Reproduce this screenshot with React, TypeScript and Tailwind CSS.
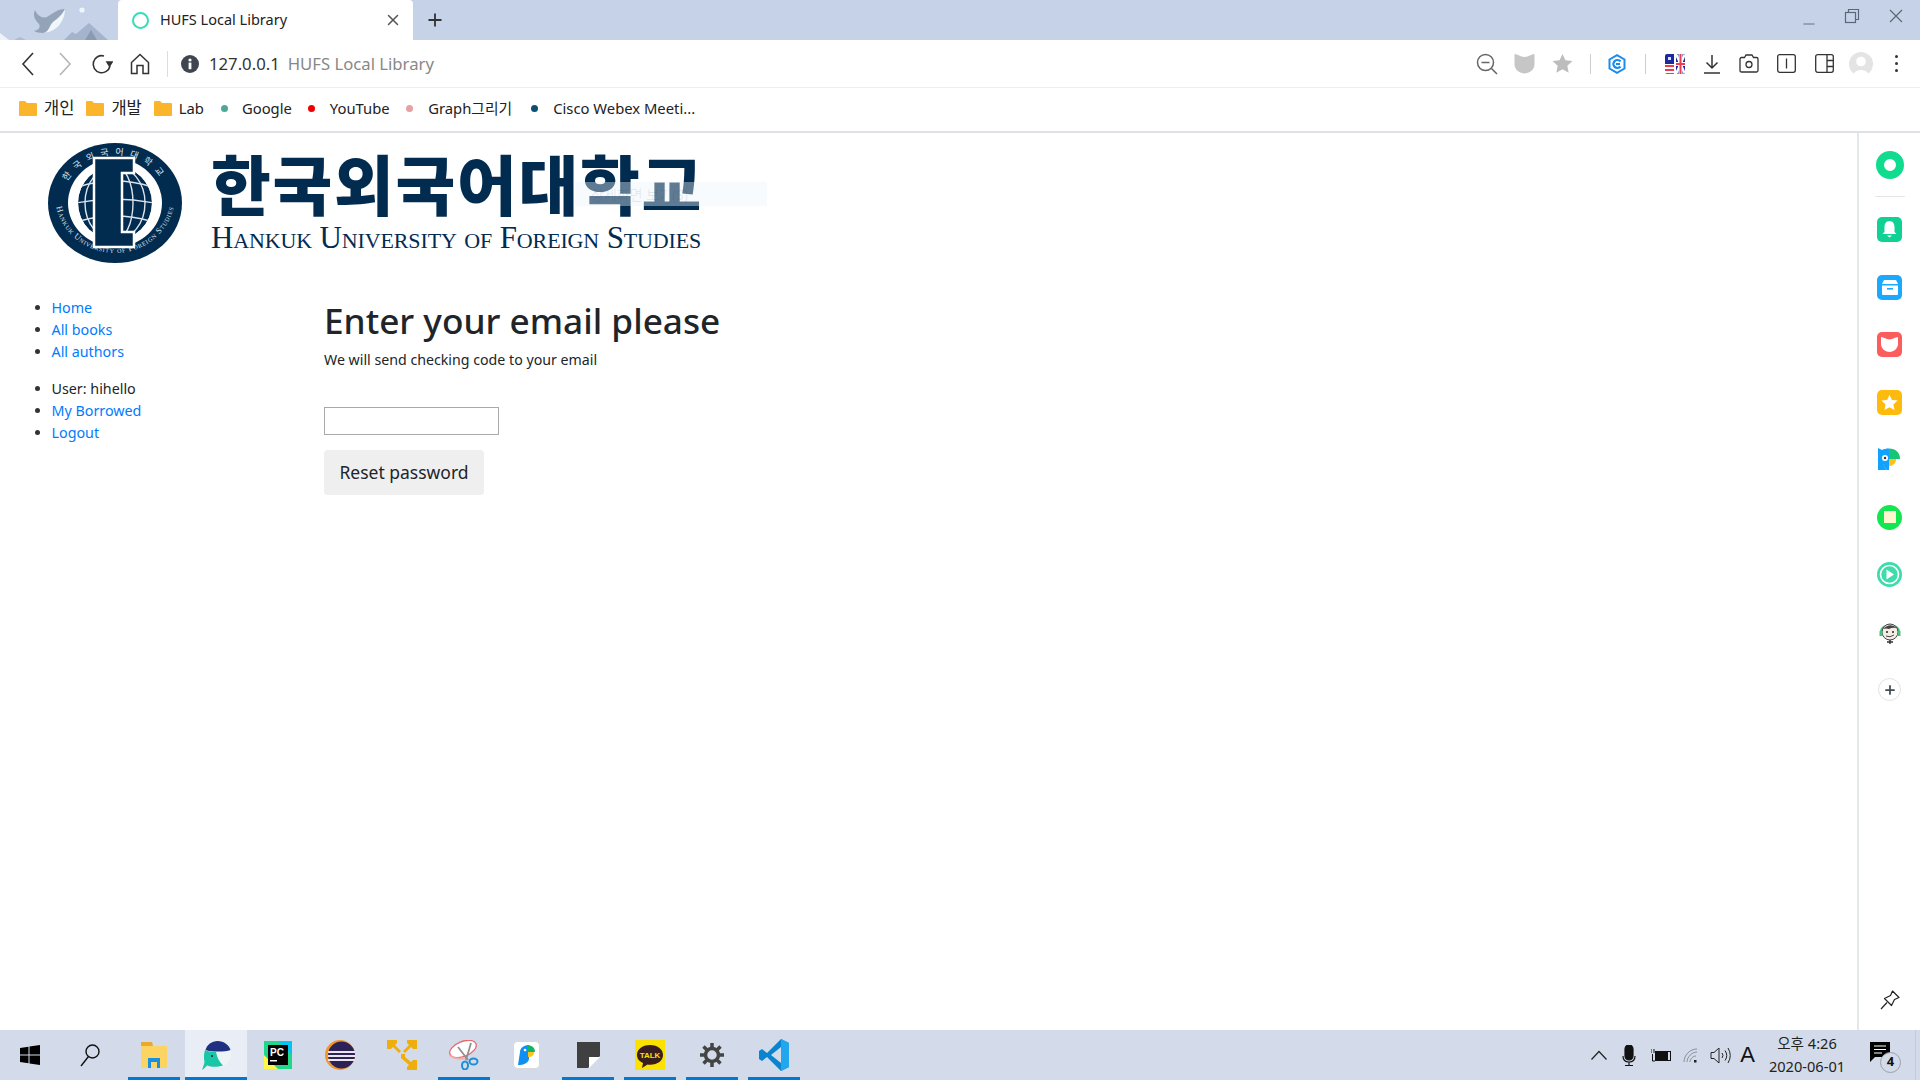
import { Minus, Plus, X } from "lucide-react";

const UI_FONT = "font-['Noto_Sans','Noto_Sans_CJK_KR',sans-serif]";

function Wallpaper() {
  return (
    <svg width="118" height="40" viewBox="0 0 118 40" className="shrink-0">
      <rect width="118" height="40" fill="#c5d2e8" />
      <path d="M0 33 L9 40 L0 40 Z" fill="#eef3fa" />
      <path d="M14 40 L20 37 L26 40 Z" fill="#aebcd3" />
      <path d="M64 40 L72 32 L76 34 L89 23 L108 40 Z" fill="#a5b4cc" />
      <path d="M85 40 L91 30 L97 40 Z" fill="#8a9ab4" />
      <circle cx="82" cy="10" r="2.6" fill="#f1f5fb" />
      <path d="M35 10 C37 15 42 19 47 17 C52 14 57 9 65 9 C63 21 55 33 43 33 C39 33 36 32 34 31 C38 30 41 28 39 24 C36 21 32 16 35 10 Z" fill="#95a3b9" />
      <path d="M65 9 C65 22 55 33 43 33 C49 32 49 26 53 22 C58 18 62 15 65 9 Z" fill="#eff7fb" />
    </svg>
  );
}

function Tab() {
  return (
    <div className="flex h-10 w-[295px] shrink-0 items-center rounded-t-[4px] bg-white">
      <span className="ml-[14px] h-[17px] w-[17px] rounded-full border-2 border-[#2fe0bb]" />
      <span className="ml-[11px] text-[14.5px] text-[#222]">HUFS Local Library</span>
      <X className="ml-auto mr-[11px] h-[18px] w-[18px] text-[#555]" strokeWidth={2} />
    </div>
  );
}

function WindowControls() {
  return (
    <div className="ml-auto flex items-center pr-[17px] text-[#5d6675]">
      <Minus className="mt-[8px] h-[18px] w-[18px]" strokeWidth={1.2} />
      <svg width="16" height="16" viewBox="0 0 16 16" fill="none" stroke="currentColor" strokeWidth="1.2" className="ml-[26px] mb-[8px]">
        <rect x="1.5" y="4.5" width="10" height="10" />
        <path d="M4.5 4.5 V1.5 H14.5 V11.5 H11.5" />
      </svg>
      <svg width="14" height="14" viewBox="0 0 14 14" fill="none" stroke="currentColor" strokeWidth="1.2" className="ml-[29px] mb-[8px]">
        <path d="M1 1 L13 13 M13 1 L1 13" />
      </svg>
    </div>
  );
}

function Slot({ children }: { children: React.ReactNode }) {
  return <div className="flex w-[37px] shrink-0 items-center justify-center">{children}</div>;
}

function NavLeft() {
  return (
    <div className="flex items-center pl-[9px] text-[#333]">
      <Slot>
        <svg width="14" height="26" viewBox="0 0 14 26" fill="none" stroke="#333" strokeWidth="1.6"><path d="M12 2 L2 13 L12 24" /></svg>
      </Slot>
      <Slot>
        <svg width="14" height="26" viewBox="0 0 14 26" fill="none" stroke="#b5b5b5" strokeWidth="1.6"><path d="M2 2 L12 13 L2 24" /></svg>
      </Slot>
      <Slot>
        <svg width="22" height="22" viewBox="0 0 22 22" fill="none" stroke="#333" strokeWidth="1.6">
          <path d="M19 13 A8.5 8.5 0 1 1 13 3" />
          <path d="M16 9 H21 L18.5 13 Z" fill="#333" />
        </svg>
      </Slot>
      <Slot>
        <svg width="20" height="22" viewBox="0 0 20 22" fill="none" stroke="#333" strokeWidth="1.5" className="ml-[2px]">
          <path d="M1.5 9.5 L10 1.5 L18.5 9.5 V20.5 H13 V12.5 H7 V20.5 H1.5 Z" />
        </svg>
      </Slot>
      <span className="ml-[10px] h-[26px] w-px bg-[#ddd]" />
      <svg width="18" height="18" viewBox="0 0 18 18" className="ml-[13px]">
        <circle cx="9" cy="9" r="9" fill="#3f4650" />
        <circle cx="9" cy="5" r="1.6" fill="#fff" />
        <rect x="7.6" y="7.6" width="2.8" height="6.6" fill="#fff" />
      </svg>
      <span className="ml-[10px] text-[16.7px] text-[#333]">127.0.0.1</span>
      <span className="ml-[8px] text-[16.7px] text-[#888]">HUFS Local Library</span>
    </div>
  );
}

function NavRight() {
  return (
    <div className="ml-auto flex items-center pr-[5px]">
      <Slot>
        <svg width="22" height="22" viewBox="0 0 22 22" fill="none" stroke="#666" strokeWidth="1.5">
          <circle cx="9.5" cy="9.5" r="8" />
          <path d="M5.5 9.5 H13.5 M15.5 15.5 L21 21" />
        </svg>
      </Slot>
      <Slot>
        <svg width="21" height="21" viewBox="0 0 21 21" className="ml-[2px]"><path d="M0.5 1 C4 1 6 4 10.5 4 C15 4 17 1 20.5 1 V11 C20.5 17 15 20.5 10.5 20.5 C6 20.5 0.5 17 0.5 11 Z" fill="#c6c6c6" /></svg>
      </Slot>
      <Slot>
        <svg width="21" height="21" viewBox="0 0 24 24" className="ml-[4px]"><path d="M12 1 L15.4 8.3 L23.4 9.2 L17.5 14.7 L19.1 22.6 L12 18.6 L4.9 22.6 L6.5 14.7 L0.6 9.2 L8.6 8.3 Z" fill="#bdbdbd" /></svg>
      </Slot>
      <span className="ml-[11px] mr-[7px] h-[20px] w-px bg-[#ccc]" />
      <Slot>
        <svg width="18" height="20" viewBox="0 0 18 20" fill="none">
          <path d="M9 1.2 L16.5 5.5 V14.5 L9 18.8 L1.5 14.5 V5.5 Z" stroke="#1a8cf0" strokeWidth="2" />
          <path d="M12.5 7.5 A4 4 0 1 0 12.5 12.5 M8 10 H12" stroke="#1a8cf0" strokeWidth="2.2" />
        </svg>
      </Slot>
      <span className="mx-[10px] h-[20px] w-px bg-[#ccc]" />
      <Slot>
        <svg width="20" height="20" viewBox="0 0 20 20" className="rounded-[2px]">
          <rect width="20" height="20" fill="#fff" />
          <rect width="9" height="10" fill="#1b2a9c" />
          <path d="M0 11 H9 V13 H0 Z M0 15 H9 V17 H0 Z M0 19 H9 V20 H0 Z" fill="#ee3b50" />
          <rect x="3" y="3" width="3" height="3" fill="#dbe1ff" />
          <rect x="11" width="9" height="20" fill="#1b2a9c" />
          <path d="M11 0 L20 20 M20 0 L11 20" stroke="#fff" strokeWidth="2.4" />
          <path d="M11 10 H20 M15.5 0 V20" stroke="#fff" strokeWidth="4" />
          <path d="M11 10 H20 M15.5 0 V20" stroke="#ee3b50" strokeWidth="2" />
        </svg>
      </Slot>
      <Slot>
        <svg width="18" height="20" viewBox="0 0 18 20" fill="none" stroke="#333" strokeWidth="1.5">
          <path d="M9 1 V14 M3.5 8.5 L9 14 L14.5 8.5 M1 19 H17" />
        </svg>
      </Slot>
      <Slot>
        <svg width="20" height="19" viewBox="0 0 20 19" fill="none" stroke="#333" strokeWidth="1.3">
          <path d="M1 5 Q1 3.5 2.5 3.5 H5.5 L7 1 H13 L14.5 3.5 H17.5 Q19 3.5 19 5 V16.5 Q19 18 17.5 18 H2.5 Q1 18 1 16.5 Z" />
          <circle cx="10" cy="10.5" r="3" />
        </svg>
      </Slot>
      <Slot>
        <svg width="19" height="19" viewBox="0 0 19 19" fill="none" stroke="#333" strokeWidth="1.3" className="ml-[2px]">
          <rect x="0.7" y="0.7" width="17.6" height="17.6" rx="2" />
          <path d="M9.5 4.5 V14.5" />
        </svg>
      </Slot>
      <Slot>
        <svg width="19" height="19" viewBox="0 0 19 19" fill="none" stroke="#333" strokeWidth="1.3" className="ml-[4px]">
          <rect x="0.7" y="0.7" width="17.6" height="17.6" rx="2" />
          <path d="M12 0.7 V18.3 M12 6.5 H18.3 M12 12.5 H18.3" />
        </svg>
      </Slot>
      <Slot>
        <svg width="24" height="24" viewBox="0 0 24 24" className="ml-[2px]">
          <circle cx="12" cy="12" r="12" fill="#e4e4e4" />
          <circle cx="12" cy="9.5" r="4.8" fill="#fff" />
          <path d="M4 24 C5 16 19 16 20 24 Z" fill="#fff" />
        </svg>
      </Slot>
      <Slot>
        <span className="flex flex-col gap-[4px]">
          <i className="block h-[3px] w-[3px] rounded-full bg-[#333]" />
          <i className="block h-[3px] w-[3px] rounded-full bg-[#333]" />
          <i className="block h-[3px] w-[3px] rounded-full bg-[#333]" />
        </span>
      </Slot>
    </div>
  );
}

function FolderIcon() {
  return (
    <svg width="18" height="15" viewBox="0 0 18 15" className="shrink-0">
      <path d="M0 1 Q0 0 1 0 H6 L8 2 H17 Q18 2 18 3 V14 Q18 15 17 15 H1 Q0 15 0 14 Z" fill="#fbb52b" />
    </svg>
  );
}

function FolderMark({ label, className, labelClass }: { label: string; className: string; labelClass?: string }) {
  return (
    <div className={`flex items-center ${className}`}>
      <FolderIcon />
      <span className={`ml-[7px] ${labelClass ?? ""}`}>{label}</span>
    </div>
  );
}

function SiteMark({ label, dot, className, gap }: { label: string; dot: string; className: string; gap: string }) {
  return (
    <div className={`flex items-center ${className}`}>
      <span className={`h-[7px] w-[7px] rounded-full ${dot}`} />
      <span className={gap}>{label}</span>
    </div>
  );
}

function Bookmarks() {
  return (
    <div className="flex h-[45px] items-center border-b-2 border-[#dfe1e8] pb-[2px] pl-[19px] text-[14.8px] text-[#222]">
      <FolderMark label="개인" className="" labelClass="text-[16.5px]" />
      <FolderMark label="개발" className="ml-[12px]" labelClass="text-[16.5px]" />
      <FolderMark label="Lab" className="ml-[12px]" />
      <SiteMark label="Google" dot="bg-[#4da898]" className="ml-[17px]" gap="ml-[14px]" />
      <SiteMark label="YouTube" dot="bg-[#f00000]" className="ml-[16px]" gap="ml-[15px]" />
      <SiteMark label="Graph그리기" dot="bg-[#e8a0a0]" className="ml-[16.5px]" gap="ml-[15px]" />
      <SiteMark label="Cisco Webex Meeti..." dot="bg-[#0b4f71]" className="ml-[19px]" gap="ml-[15px]" />
    </div>
  );
}

function Seal() {
  return (
    <svg width="134" height="120" viewBox="0 0 134 120" className="shrink-0">
      <defs>
        <path id="sealTop" d="M13 62 A54 50 0 0 1 121 62" />
        <path id="sealBottom" d="M7 52 A60 58 0 0 0 127 52" />
        <clipPath id="sealGlobe"><circle cx="67" cy="60" r="37" /></clipPath>
      </defs>
      <ellipse cx="67" cy="60" rx="67" ry="60" fill="#022b50" />
      <ellipse cx="67" cy="60" rx="47" ry="44" fill="#fff" />
      <text fontFamily="'Noto Sans CJK KR',sans-serif" fontSize="9" fill="#dfe6ee">
        <textPath href="#sealTop" startOffset="50%" textAnchor="middle" letterSpacing="6">한국외국어대학교</textPath>
      </text>
      <text fontFamily="'Liberation Serif',serif" fontSize="8.5" fill="#dfe6ee" className="[font-variant:small-caps]">
        <textPath href="#sealBottom" startOffset="50%" textAnchor="middle" letterSpacing="0.7">Hankuk University of Foreign Studies</textPath>
      </text>
      <g clipPath="url(#sealGlobe)">
        <circle cx="67" cy="60" r="37" fill="#022b50" />
        <g fill="none" stroke="#dbe3ec" strokeWidth="1.4">
          <ellipse cx="67" cy="60" rx="18" ry="37" />
          <ellipse cx="67" cy="60" rx="30" ry="37" />
          <path d="M30 44 Q67 32 104 44 M28 60 Q67 52 106 60 M32 78 Q67 68 102 78" />
        </g>
      </g>
      <path d="M46 15 H86 V30 H74 V89 H86 V104 H46 Z" fill="#022b50" stroke="#fff" strokeWidth="2.5" />
    </svg>
  );
}

function Logo() {
  return (
    <div className="relative flex h-[164px] items-start pl-[48px] pt-[10px]">
      <Seal />
      <div className="ml-[29px] flex flex-col text-[#022b50]">
        <span className="mt-[1px] text-[65px] leading-[76px] font-black tracking-[1.7px] whitespace-nowrap font-['Noto_Sans_CJK_KR',sans-serif]">
          한국외국어대학교
        </span>
        <span className="mt-[1px] text-[31px] leading-[34px] tracking-[-0.14px] whitespace-nowrap font-['Liberation_Serif',serif] [font-variant:small-caps]">
          Hankuk University of Foreign Studies
        </span>
      </div>
      {/* 이미지 위에 뜨는 번역 툴팁 잔상 */}
      <div className="absolute left-[575px] top-[49px] flex h-[24px] w-[192px] items-center bg-[#eaf4fb]/40 pl-[16px] text-[14px] text-[#022b50]/10">
        상세화면 보기(S)
      </div>
    </div>
  );
}

function SideNav() {
  return (
    <div className="w-[324px] shrink-0 pl-[51.5px] text-[14.3px] leading-[22px]">
      <ul className="list-disc marker:text-[#333]">
        <li className="text-[#007bff]">Home</li>
        <li className="text-[#007bff]">All books</li>
        <li className="text-[#007bff]">All authors</li>
      </ul>
      <ul className="mt-[15px] list-disc marker:text-[#333]">
        <li className="text-[#212529]">User: hihello</li>
        <li className="text-[#007bff]">My Borrowed</li>
        <li className="text-[#007bff]">Logout</li>
      </ul>
    </div>
  );
}

function ResetForm() {
  return (
    <div className="text-[#212529]">
      <h1 className="mt-[-2px] text-[35.2px] leading-[50px] font-medium whitespace-nowrap">Enter your email please</h1>
      <p className="mt-[4px] text-[14.2px] leading-[22px]">We will send checking code to your email</p>
      <input type="text" className="mt-[36px] block h-[28px] w-[175px] border border-[#a9a9a9] bg-white" />
      <button className="mt-[15px] block h-[45px] w-[160px] rounded-[4px] bg-[#efefef] text-[17.5px] text-[#212529]">
        Reset password
      </button>
    </div>
  );
}

function SideTile({ children }: { children: React.ReactNode }) {
  return <div className="flex h-[57.5px] items-center justify-center">{children}</div>;
}

function RightRail() {
  return (
    <div className="flex w-[63px] shrink-0 flex-col border-l-2 border-[#e2e9ea]">
      <div className="mx-auto flex h-[64px] w-[30px] items-center justify-center border-b border-[#e6e6e6]">
        <span className="h-[28px] w-[28px] rounded-full border-[8px] border-[#10dc90] bg-white" />
      </div>
      <div className="h-[4px]" />
      <SideTile>
        <span className="flex h-[25px] w-[25px] items-center justify-center rounded-[5px] bg-[#0fd194]">
          <svg width="15" height="17" viewBox="0 0 15 17" fill="#fff"><path d="M7.5 0 C11 0 12.5 3 12.5 6 V11 L14.5 13 H0.5 L2.5 11 V6 C2.5 3 4 0 7.5 0 Z M5 14.5 H10 L7.5 16.5 Z" /></svg>
        </span>
      </SideTile>
      <SideTile>
        <span className="flex h-[25px] w-[25px] items-center justify-center rounded-[5px] bg-[#1ba8ff]">
          <svg width="16" height="15" viewBox="0 0 16 15" fill="#fff"><path d="M2 0 H14 L16 4 H0 Z M0 5.5 H16 V14 Q16 15 15 15 H1 Q0 15 0 14 Z" /><rect x="5" y="8" width="6" height="1.6" fill="#1ba8ff" /></svg>
        </span>
      </SideTile>
      <SideTile>
        <span className="flex h-[25px] w-[25px] items-center justify-center rounded-[5px] bg-[#fb5c5c]">
          <svg width="17" height="15" viewBox="0 0 17 15" fill="#fff"><path d="M0 0 C3 0 5 2.5 8.5 2.5 C12 2.5 14 0 17 0 V7 C17 12 12 15 8.5 15 C5 15 0 12 0 7 Z" /></svg>
        </span>
      </SideTile>
      <SideTile>
        <span className="flex h-[25px] w-[25px] items-center justify-center rounded-[5px] bg-[#ffbb0d]">
          <svg width="17" height="17" viewBox="0 0 24 24" fill="#fff"><path d="M12 1 L15.4 8.3 L23.4 9.2 L17.5 14.7 L19.1 22.6 L12 18.6 L4.9 22.6 L6.5 14.7 L0.6 9.2 L8.6 8.3 Z" /></svg>
        </span>
      </SideTile>
      <SideTile>
        <svg width="23" height="23" viewBox="0 0 23 23">
          <path d="M0 0 L4 2 C6 1 8 0.5 11 0.5 C3 2 3 17 9 22 H0 Z" fill="#11a1ff" />
          <path d="M4 8 C4 4 7 1 11 0.5 V22 H9 C5 19 4 13 4 8 Z" fill="#11a1ff" />
          <circle cx="7" cy="10" r="3" fill="#fff" />
          <circle cx="7" cy="10" r="1.2" fill="#333" />
          <path d="M11 0.5 C18 0.5 22 5 22 11 H11 Z" fill="#16c576" />
          <path d="M11 11 H18 C18 15 15 18 11 18 Z" fill="#ffc018" />
        </svg>
      </SideTile>
      <SideTile>
        <span className="flex h-[25px] w-[25px] items-center justify-center rounded-full bg-[#12e650]">
          <span className="h-[12px] w-[12px] bg-[#fdf6cf]" />
        </span>
      </SideTile>
      <SideTile>
        <svg width="25" height="25" viewBox="0 0 25 25">
          <circle cx="12.5" cy="12.5" r="12.5" fill="#3ddcaa" />
          <circle cx="12.5" cy="12.5" r="9" fill="none" stroke="#fff" strokeWidth="1.6" />
          <path d="M9.5 7.5 L17 12.5 L9.5 17.5 Z" fill="#fff" />
        </svg>
      </SideTile>
      <SideTile>
        <svg width="24" height="25" viewBox="0 0 24 25" fill="none">
          <path d="M3 12 C3 3 21 3 21 12" stroke="#42c47c" strokeWidth="2" />
          <circle cx="12" cy="12" r="8" fill="#f5ece5" stroke="#444" />
          <path d="M5 9 Q12 2 19 8 Q14 7 11 9 Q8 8 5 9 Z" fill="#444" />
          <circle cx="9" cy="12" r="1" fill="#222" />
          <circle cx="15" cy="12" r="1" fill="#222" />
          <path d="M8 16 Q12 18 16 15" stroke="#444" />
          <path d="M9 22 H15 M12 20 V24" stroke="#333" strokeWidth="1.4" />
          <rect x="1.5" y="11" width="3" height="5" fill="#42c47c" />
          <rect x="19.5" y="11" width="3" height="5" fill="#42c47c" />
        </svg>
      </SideTile>
      <SideTile>
        <span className="flex h-[23px] w-[23px] items-center justify-center rounded-full border border-[#e2e2e2]">
          <Plus className="h-[14px] w-[14px] text-[#444b55]" strokeWidth={3} />
        </span>
      </SideTile>
      <div className="mt-auto flex h-[60px] items-center justify-center">
        <svg width="20" height="20" viewBox="0 0 20 20" fill="none" stroke="#222" strokeWidth="1.2">
          <path d="M12.5 1 L19 7.5 L14.5 9.5 L11.5 15.5 L4.5 8.5 L10.5 5.5 Z M7 12.5 L1 19" strokeLinejoin="round" />
        </svg>
      </div>
    </div>
  );
}

function TaskIcon({ children, open, active }: { children: React.ReactNode; open?: boolean; active?: boolean }) {
  return (
    <div className={`relative flex h-full w-[62px] shrink-0 items-center justify-center ${active ? "bg-[#e9edf5]" : ""}`}>
      {children}
      {open && <span className="absolute inset-x-[5px] bottom-0 h-[3px] bg-[#0078d4]" />}
      {active && <span className="absolute inset-x-0 bottom-0 h-[3px] bg-[#0078d4]" />}
    </div>
  );
}

function TaskApps() {
  return (
    <div className="flex h-full items-center">
      <div className="flex h-full w-[60px] items-center justify-center">
        <svg width="20" height="20" viewBox="0 0 20 20" fill="#000"><path d="M0 3 L8.5 1.8 V9.5 H0 Z M9.5 1.6 L20 0 V9.5 H9.5 Z M0 10.5 H8.5 V18.2 L0 17 Z M9.5 10.5 H20 V20 L9.5 18.4 Z" /></svg>
      </div>
      <div className="flex h-full w-[60px] items-center justify-center">
        <svg width="20" height="24" viewBox="0 0 20 24" fill="none" stroke="#111" strokeWidth="1.4"><circle cx="12.5" cy="8.5" r="6.5" /><path d="M8.5 13.5 L1 23" /></svg>
      </div>
      <div className="w-[3px]" />
      <TaskIcon open>
        <svg width="28" height="28" viewBox="0 0 28 28">
          <path d="M1 3 Q1 1 3 1 H11 L13 5 H27 V27 H1 Z" fill="#fcd462" />
          <path d="M1 1 H12 L13 5 H1 Z" fill="#eba92b" />
          <path d="M8 27 V17 H20 V27 H17 V21 H11 V27 Z" fill="#1a8fe0" />
        </svg>
      </TaskIcon>
      <TaskIcon active>
        <svg width="29" height="29" viewBox="0 0 29 29">
          <circle cx="16" cy="13" r="13" fill="#eef4f6" />
          <path d="M3.5 9 C5 3.5 10 0 15.5 0 C22 0 27 4 28.5 9 C23 11 9 11 3.5 9 Z" fill="#1f2f82" />
          <path d="M3 9 C6 10.5 10 11 14 11 C15 16 17 21 21 24.5 C15 26.5 9 26 5 24.5 C3.5 26 2 28 0 29 C1 26 2 24 2.5 21 C1.5 17 2 12 3 9 Z" fill="#19c6a6" />
          <circle cx="10" cy="15" r="1" fill="#123" />
        </svg>
      </TaskIcon>
      <TaskIcon>
        <svg width="28" height="28" viewBox="0 0 28 28">
          <path d="M0 0 H18 L28 8 V28 H6 L0 20 Z" fill="#21d789" />
          <path d="M14 0 H28 V14 Z" fill="#07c3f2" />
          <path d="M0 14 V28 H14 Z" fill="#fcf84a" />
          <rect x="4" y="4" width="20" height="20" fill="#000" />
          <text x="6" y="15" fontFamily="'Liberation Sans',sans-serif" fontSize="10" fontWeight="700" fill="#fff">PC</text>
          <rect x="6" y="19" width="7" height="1.5" fill="#fff" />
        </svg>
      </TaskIcon>
      <TaskIcon>
        <svg width="30" height="30" viewBox="0 0 30 30">
          <circle cx="15" cy="15" r="15" fill="#f3962e" />
          <circle cx="16.5" cy="15" r="13.5" fill="#2c2255" />
          <path d="M3 11 H30 V13 H3 Z M3 15 H30 V17 H3 Z M3 19 H30 V21 H3 Z" fill="#e9e6f2" />
        </svg>
      </TaskIcon>
      <TaskIcon>
        <svg width="30" height="30" viewBox="0 0 30 30" fill="#eeae0d">
          <path d="M0 0 H10 V3 L8 5 L14 11 L12 13 L6 7 L4 9 H0 Z" />
          <path d="M30 0 H20 V3 L22 5 L16 11 L18 13 L24 7 L26 9 H30 Z" />
          <path d="M14 14 H18 V17 L24 22 L26 20 H30 V30 H20 V27 L22 25 L14 18 Z" />
        </svg>
      </TaskIcon>
      <TaskIcon open>
        <svg width="30" height="30" viewBox="0 0 30 30" fill="none">
          <ellipse cx="14" cy="9" rx="14" ry="7.5" transform="rotate(-22 14 9)" fill="#fff" stroke="#e9686b" strokeWidth="1.3" />
          <path d="M1 16 Q7 20 17 18" stroke="#eeb0b0" strokeWidth="2" />
          <path d="M9 7 L19 20 M22 3 L17 20" stroke="#909090" strokeWidth="1.8" />
          <ellipse cx="16" cy="25.5" rx="3" ry="4" stroke="#1d8ed6" strokeWidth="2" />
          <ellipse cx="24.5" cy="21.5" rx="4" ry="3" stroke="#1d8ed6" strokeWidth="2" />
        </svg>
      </TaskIcon>
      <TaskIcon>
        <svg width="27" height="28" viewBox="0 0 27 28">
          <rect x="0.5" y="0.5" width="26" height="27" rx="4" fill="#fff" stroke="#d8d8d8" />
          <path d="M5 24 L7 11 C7 7 11 4 16 4 V18 C15 22 11 24 5 24 Z" fill="#118ff0" />
          <path d="M14 4 C18 4 22 6 22 11 H14 Z" fill="#13b565" />
          <path d="M15 11 H21 C21 14 19 16 15 16 Z" fill="#fcc419" />
          <circle cx="12" cy="9" r="1.3" fill="#fff" />
        </svg>
      </TaskIcon>
      <TaskIcon open>
        <svg width="23" height="26" viewBox="0 0 23 26">
          <path d="M0 0 H23 V14 L11 26 H0 Z" fill="#404040" />
          <path d="M12 26 V15 H23 Z" fill="#fff" />
        </svg>
      </TaskIcon>
      <TaskIcon open>
        <svg width="30" height="30" viewBox="0 0 30 30">
          <rect width="30" height="30" fill="#fae100" />
          <path d="M15 5 C7 5 2 9.5 2 15 C2 18.5 4.3 21.5 8 23 L7 28 L12.5 24.5 C13.3 24.6 14.2 24.7 15 24.7 C23 24.7 28 20.5 28 15 C28 9.5 23 5 15 5 Z" fill="#381e1f" />
          <text x="15" y="18" textAnchor="middle" fontFamily="'Liberation Sans',sans-serif" fontSize="8" fontWeight="700" fill="#fae100">TALK</text>
        </svg>
      </TaskIcon>
      <TaskIcon open>
        <svg width="24" height="24" viewBox="0 0 24 24" fill="none">
          <circle cx="12" cy="12" r="6.5" stroke="#444" strokeWidth="3.5" />
          <path d="M12 0 V5 M12 19 V24 M0 12 H5 M19 12 H24 M3.5 3.5 L7 7 M17 17 L20.5 20.5 M20.5 3.5 L17 7 M7 17 L3.5 20.5" stroke="#444" strokeWidth="3.5" />
        </svg>
      </TaskIcon>
      <TaskIcon open>
        <svg width="30" height="32" viewBox="0 0 30 32">
          <path d="M22 0 L30 4 V28 L22 32 L8 18 L3 22 L0 20 V12 L3 10 L8 14 Z" fill="#0a84cf" />
          <path d="M22 0 L30 4 V28 L22 32 Z" fill="#22a7ee" />
          <path d="M22 8 L12 16 L22 24 Z" fill="#d3dbea" />
        </svg>
      </TaskIcon>
    </div>
  );
}

function Tray() {
  return (
    <div className="ml-auto flex h-full items-center text-[#111]">
      <svg width="16" height="10" viewBox="0 0 16 10" fill="none" stroke="#222" strokeWidth="1.2"><path d="M0.5 9.5 L8 1.5 L15.5 9.5" /></svg>
      <svg width="14" height="21" viewBox="0 0 14 21" className="ml-[15px]" fill="none" stroke="#111" strokeWidth="1.2">
        <rect x="3" y="0" width="8" height="15" rx="4" fill="#111" />
        <path d="M1 11 C1 15 3.5 17 7 17 C10.5 17 13 15 13 11 M7 17 V20 M3 20.5 H11" />
      </svg>
      <svg width="20" height="14" viewBox="0 0 20 14" className="ml-[15px]" fill="none" stroke="#111" strokeWidth="1">
        <rect x="4.5" y="3.5" width="15" height="9" />
        <rect x="5.5" y="4.5" width="11" height="7" fill="#111" />
        <path d="M0 1 V5 M3 1 V5 M1.5 6 V13 H4" />
      </svg>
      <svg width="15" height="15" viewBox="0 0 15 15" className="ml-[12px]" fill="none" stroke="#8a8f98" strokeWidth="1">
        <path d="M1 14 C1 7 7 1 14 1 M4 14 C4 9 9 4 14 4 M7 14 C7 11 10 8 13 8" />
        <rect x="11" y="12" width="2.5" height="2.5" fill="#222" stroke="none" />
      </svg>
      <svg width="21" height="17" viewBox="0 0 21 17" className="ml-[12px]" fill="none" stroke="#222" strokeWidth="1">
        <path d="M1 5.5 H4 L9 1 V16 L4 11.5 H1 Z M12 6 Q14 8.5 12 11 M15 3.5 Q18.5 8.5 15 13.5 M18 1 Q22.5 8.5 18 16" />
      </svg>
      <span className="ml-[9px] text-[22px] leading-none font-['Liberation_Sans',sans-serif]">A</span>
      <div className="ml-[14px] flex w-[76px] flex-col items-center text-[14.6px] leading-[23px] text-[#222]">
        <span>오후 4:26</span>
        <span className="whitespace-nowrap">2020-06-01</span>
      </div>
      <div className="relative ml-[25px] mr-[25px] h-[27px] w-[20px]">
        <svg width="20" height="20" viewBox="0 0 20 20">
          <path d="M0 0 H20 V15 H5 L0 20 Z" fill="#000" />
          <path d="M4 4 H16 M4 7.5 H16 M4 11 H12" stroke="#fff" />
        </svg>
        {/* 알림 개수 배지 */}
        <span className="absolute left-[10px] top-[10px] flex h-[21px] w-[21px] items-center justify-center rounded-full border border-[#9aa0a8] bg-[#d3dbea] text-[13px] font-bold text-[#111]">
          4
        </span>
      </div>
      <span className="h-full w-px bg-[#c2cada]" />
      <span className="w-[4px]" />
    </div>
  );
}

export default function App() {
  return (
    <div className={`flex h-screen w-screen flex-col overflow-hidden bg-white ${UI_FONT}`}>
      <div className="flex h-10 shrink-0 items-center bg-[#c5d2e8]">
        <Wallpaper />
        <Tab />
        <Plus className="ml-[12px] h-[20px] w-[20px] text-[#333]" strokeWidth={2.2} />
        <WindowControls />
      </div>
      <div className="flex h-[48px] shrink-0 items-center border-b border-[#eeeeee]">
        <NavLeft />
        <NavRight />
      </div>
      <Bookmarks />
      <div className="flex min-h-0 flex-1">
        <div className="min-w-0 flex-1">
          <Logo />
          <div className="flex">
            <SideNav />
            <ResetForm />
          </div>
        </div>
        <RightRail />
      </div>
      <div className="flex h-[50px] shrink-0 items-center bg-[#d3dbea]">
        <TaskApps />
        <Tray />
      </div>
    </div>
  );
}
